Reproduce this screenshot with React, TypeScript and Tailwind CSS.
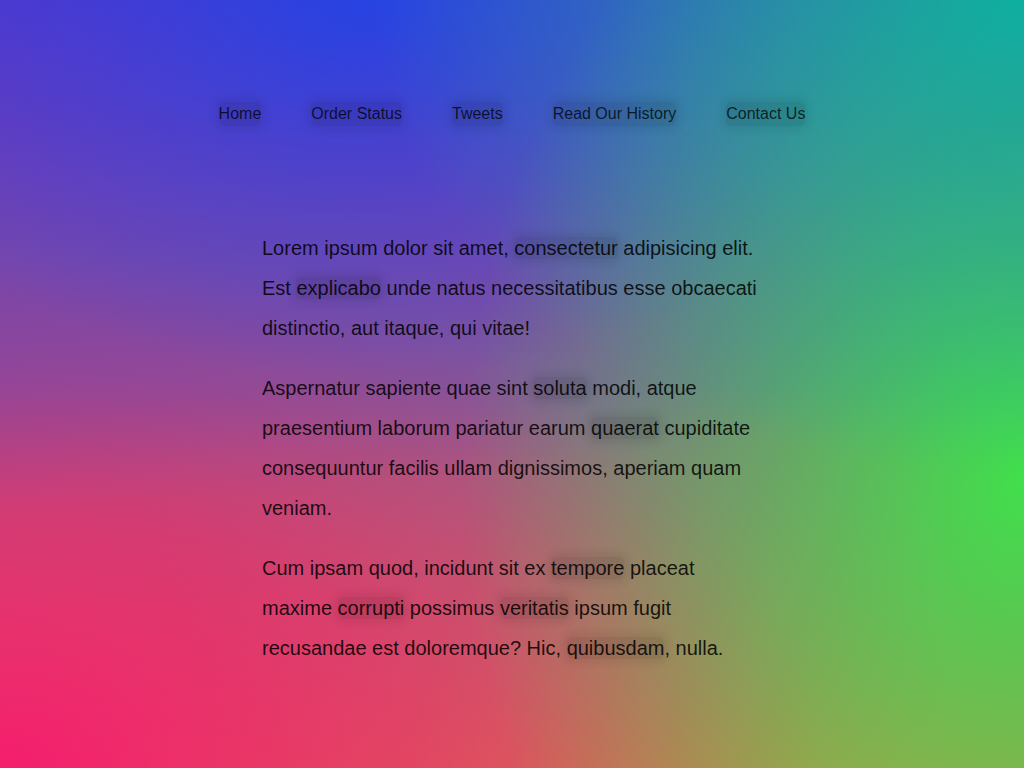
import React from 'react';

const links = ['Home', 'Order Status', 'Tweets', 'Read Our History', 'Contact Us'];

// words wrapped in a soft dark glow
const Mark = ({ children }: { children: React.ReactNode }) => (
  <span className="rounded-md bg-black/10 shadow-[0_0_8px_4px_rgba(0,0,0,0.08)]">{children}</span>
);

export default function App() {
  return (
    <div className="min-h-screen w-full font-['Liberation_Sans',Arial,sans-serif] bg-[radial-gradient(ellipse_650px_480px_at_100%_0%,rgba(5,182,160,0.9)_0%,rgba(5,182,160,0)_100%),radial-gradient(ellipse_560px_720px_at_100%_62%,rgba(60,230,72,0.95)_0%,rgba(60,230,72,0.45)_50%,rgba(60,230,72,0)_100%),radial-gradient(ellipse_560px_380px_at_36%_0%,rgba(28,70,232,0.85)_0%,rgba(28,70,232,0.4)_50%,rgba(28,70,232,0)_100%),linear-gradient(175deg,rgba(30,50,232,0.65)_0%,rgba(30,50,232,0)_60%),radial-gradient(ellipse_820px_520px_at_0%_100%,rgba(245,30,110,1)_0%,rgba(245,30,110,0.6)_50%,rgba(245,30,110,0)_100%),linear-gradient(180deg,#d0388a_0%,#8a5c92_50%,#c88050_100%)]">
      <nav className="flex justify-center gap-[50px] pt-[102px] text-base leading-6 text-black/75">
        {links.map((l) => (
          <a key={l} href="#" className="rounded-md bg-black/10 shadow-[0_0_8px_4px_rgba(0,0,0,0.08)]">
            {l}
          </a>
        ))}
      </nav>

      <main className="mx-auto mt-[102px] w-[500px] space-y-5 pb-24 text-[20px] leading-10 text-black/85">
        <p>
          Lorem ipsum dolor sit amet, <Mark>consectetur</Mark> adipisicing elit. Est <Mark>explicabo</Mark> unde natus
          necessitatibus esse obcaecati distinctio, aut itaque, qui vitae!
        </p>
        <p>
          Aspernatur sapiente quae sint <Mark>soluta</Mark> modi, atque praesentium laborum pariatur earum{' '}
          <Mark>quaerat</Mark> cupiditate consequuntur facilis ullam dignissimos, aperiam quam veniam.
        </p>
        <p>
          Cum ipsam quod, incidunt sit ex <Mark>tempore</Mark> placeat maxime <Mark>corrupti</Mark> possimus{' '}
          <Mark>veritatis</Mark> ipsum fugit recusandae est doloremque? Hic, <Mark>quibusdam</Mark>, nulla.
        </p>
      </main>
    </div>
  );
}
